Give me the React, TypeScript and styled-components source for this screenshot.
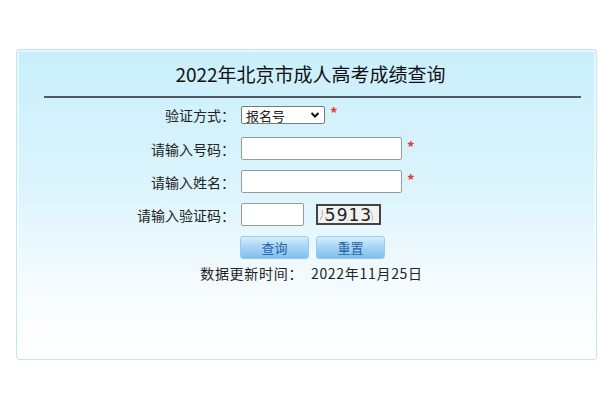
import styled, { createGlobalStyle } from 'styled-components';

const GlobalStyle = createGlobalStyle`
  html, body {
    margin: 0;
    padding: 0;
    background: #fff;
  }
  body {
    font-family: "Noto Sans CJK SC", "Liberation Sans", sans-serif;
    color: #222;
  }
`;

const Page = styled.div`
  width: 600px;
  height: 400px;
  padding: 49px 0 0 16px;
  box-sizing: border-box;
`;

const Panel = styled.div`
  width: 581px;
  height: 311px;
  box-sizing: border-box;
  border: 1px solid #bfeaf2;
  border-radius: 3px;
  background: linear-gradient(to bottom, #c9effc 0%, #dcf4fc 45%, #f4fbfe 75%, #ffffff 100%);
  box-shadow: inset 0 0 0 2px rgba(255, 255, 255, 0.5);
`;

const Title = styled.h1`
  margin: 0;
  height: 46px;
  line-height: 48px;
  font-size: 19px;
  font-weight: 400;
  text-align: center;
  color: #111;
  padding-left: 8px;
`;

const Divider = styled.div`
  height: 2px;
  margin: 0 15px 0 27px;
  background: #4f5a60;
`;

const Form = styled.div`
  display: flex;
  flex-direction: column;
`;

const Row = styled.div<{ $h?: number }>`
  display: grid;
  grid-template-columns: 218px auto;
  column-gap: 6px;
  align-items: center;
  height: ${(p) => p.$h ?? 33}px;
`;

const Label = styled.label`
  text-align: right;
  font-size: 14px;
  color: #222;
`;

const Field = styled.div`
  display: flex;
  align-items: center;
  gap: 5px;
`;

const Select = styled.div`
  width: 84px;
  height: 18px;
  box-sizing: border-box;
  border: 1px solid #7a7a7a;
  border-radius: 2px;
  background: #fff;
  display: flex;
  align-items: center;
  justify-content: space-between;
  padding: 0 4px 0 4px;
  font-size: 13px;
`;

const Input = styled.input<{ $w: number }>`
  width: ${(p) => p.$w}px;
  height: 23px;
  box-sizing: border-box;
  border: 1px solid #9a9a9a;
  border-radius: 2px;
  background: #fff;
  padding: 0 3px;
  outline: none;
`;

const Star = styled.span`
  color: #e53935;
  font-size: 15px;
  font-weight: 700;
  line-height: 1;
  margin-top: -5px;
`;

const Captcha = styled.div`
  position: relative;
  width: 65px;
  height: 21px;
  box-sizing: border-box;
  border: 2px solid #444;
  background: #f2f2f2;
  display: flex;
  align-items: center;
  justify-content: center;
  font-family: "DejaVu Sans", sans-serif;
  font-size: 17px;
  letter-spacing: 1px;
  color: #222;
  margin-left: 7px;
  overflow: hidden;
`;

const Noise = styled.svg`
  position: absolute;
  inset: 0;
  pointer-events: none;
`;

const Buttons = styled.div`
  display: flex;
  gap: 7px;
  margin-left: -1px;
`;

const Button = styled.button`
  width: 69px;
  height: 23px;
  border: 1px solid #9cc9ea;
  border-radius: 3px;
  background: linear-gradient(to bottom, #d6eefc 0%, #a9d6f5 45%, #7cc0ee 100%);
  color: #2a64a8;
  font-family: "Noto Sans CJK SC", sans-serif;
  font-size: 13px;
  padding: 0;
`;

const DateLine = styled.div`
  height: 18px;
  line-height: 18px;
  text-align: center;
  font-size: 14px;
  color: #222;
  padding-left: 10px;
  word-spacing: 4px;
  letter-spacing: 0.7px;
`;

function Chevron() {
  return (
    <svg width="10" height="8" viewBox="0 0 10 8">
      <path d="M1.5 2 L5 5.5 L8.5 2" fill="none" stroke="#111" strokeWidth="2" />
    </svg>
  );
}

export default function App() {
  return (
    <>
      <GlobalStyle />
      <Page>
        <Panel>
          <Title>2022年北京市成人高考成绩查询</Title>
          <Divider />
          <Form>
            <Row $h={34}>
              <Label>验证方式：</Label>
              <Field>
                <Select>
                  <span>报名号</span>
                  <Chevron />
                </Select>
                <Star>*</Star>
              </Field>
            </Row>
            <Row>
              <Label>请输入号码：</Label>
              <Field>
                <Input $w={161} />
                <Star>*</Star>
              </Field>
            </Row>
            <Row>
              <Label>请输入姓名：</Label>
              <Field>
                <Input $w={161} />
                <Star>*</Star>
              </Field>
            </Row>
            <Row>
              <Label>请输入验证码：</Label>
              <Field>
                <Input $w={63} />
                <Captcha>
                  5913
                  <Noise width="61" height="17" viewBox="0 0 61 17">
                    <path d="M2 14 Q6 10 4 4" stroke="#999" strokeWidth="0.8" fill="none" />
                    <path d="M50 2 Q56 8 54 15" stroke="#aaa" strokeWidth="0.8" fill="none" />
                    <circle cx="8" cy="12" r="0.8" fill="#777" />
                    <circle cx="44" cy="4" r="0.7" fill="#888" />
                    <circle cx="30" cy="14" r="0.6" fill="#999" />
                  </Noise>
                </Captcha>
              </Field>
            </Row>
            <Row>
              <span />
              <Buttons>
                <Button>查询</Button>
                <Button>重置</Button>
              </Buttons>
            </Row>
            <DateLine>数据更新时间： 2022年11月25日</DateLine>
          </Form>
        </Panel>
      </Page>
    </>
  );
}
